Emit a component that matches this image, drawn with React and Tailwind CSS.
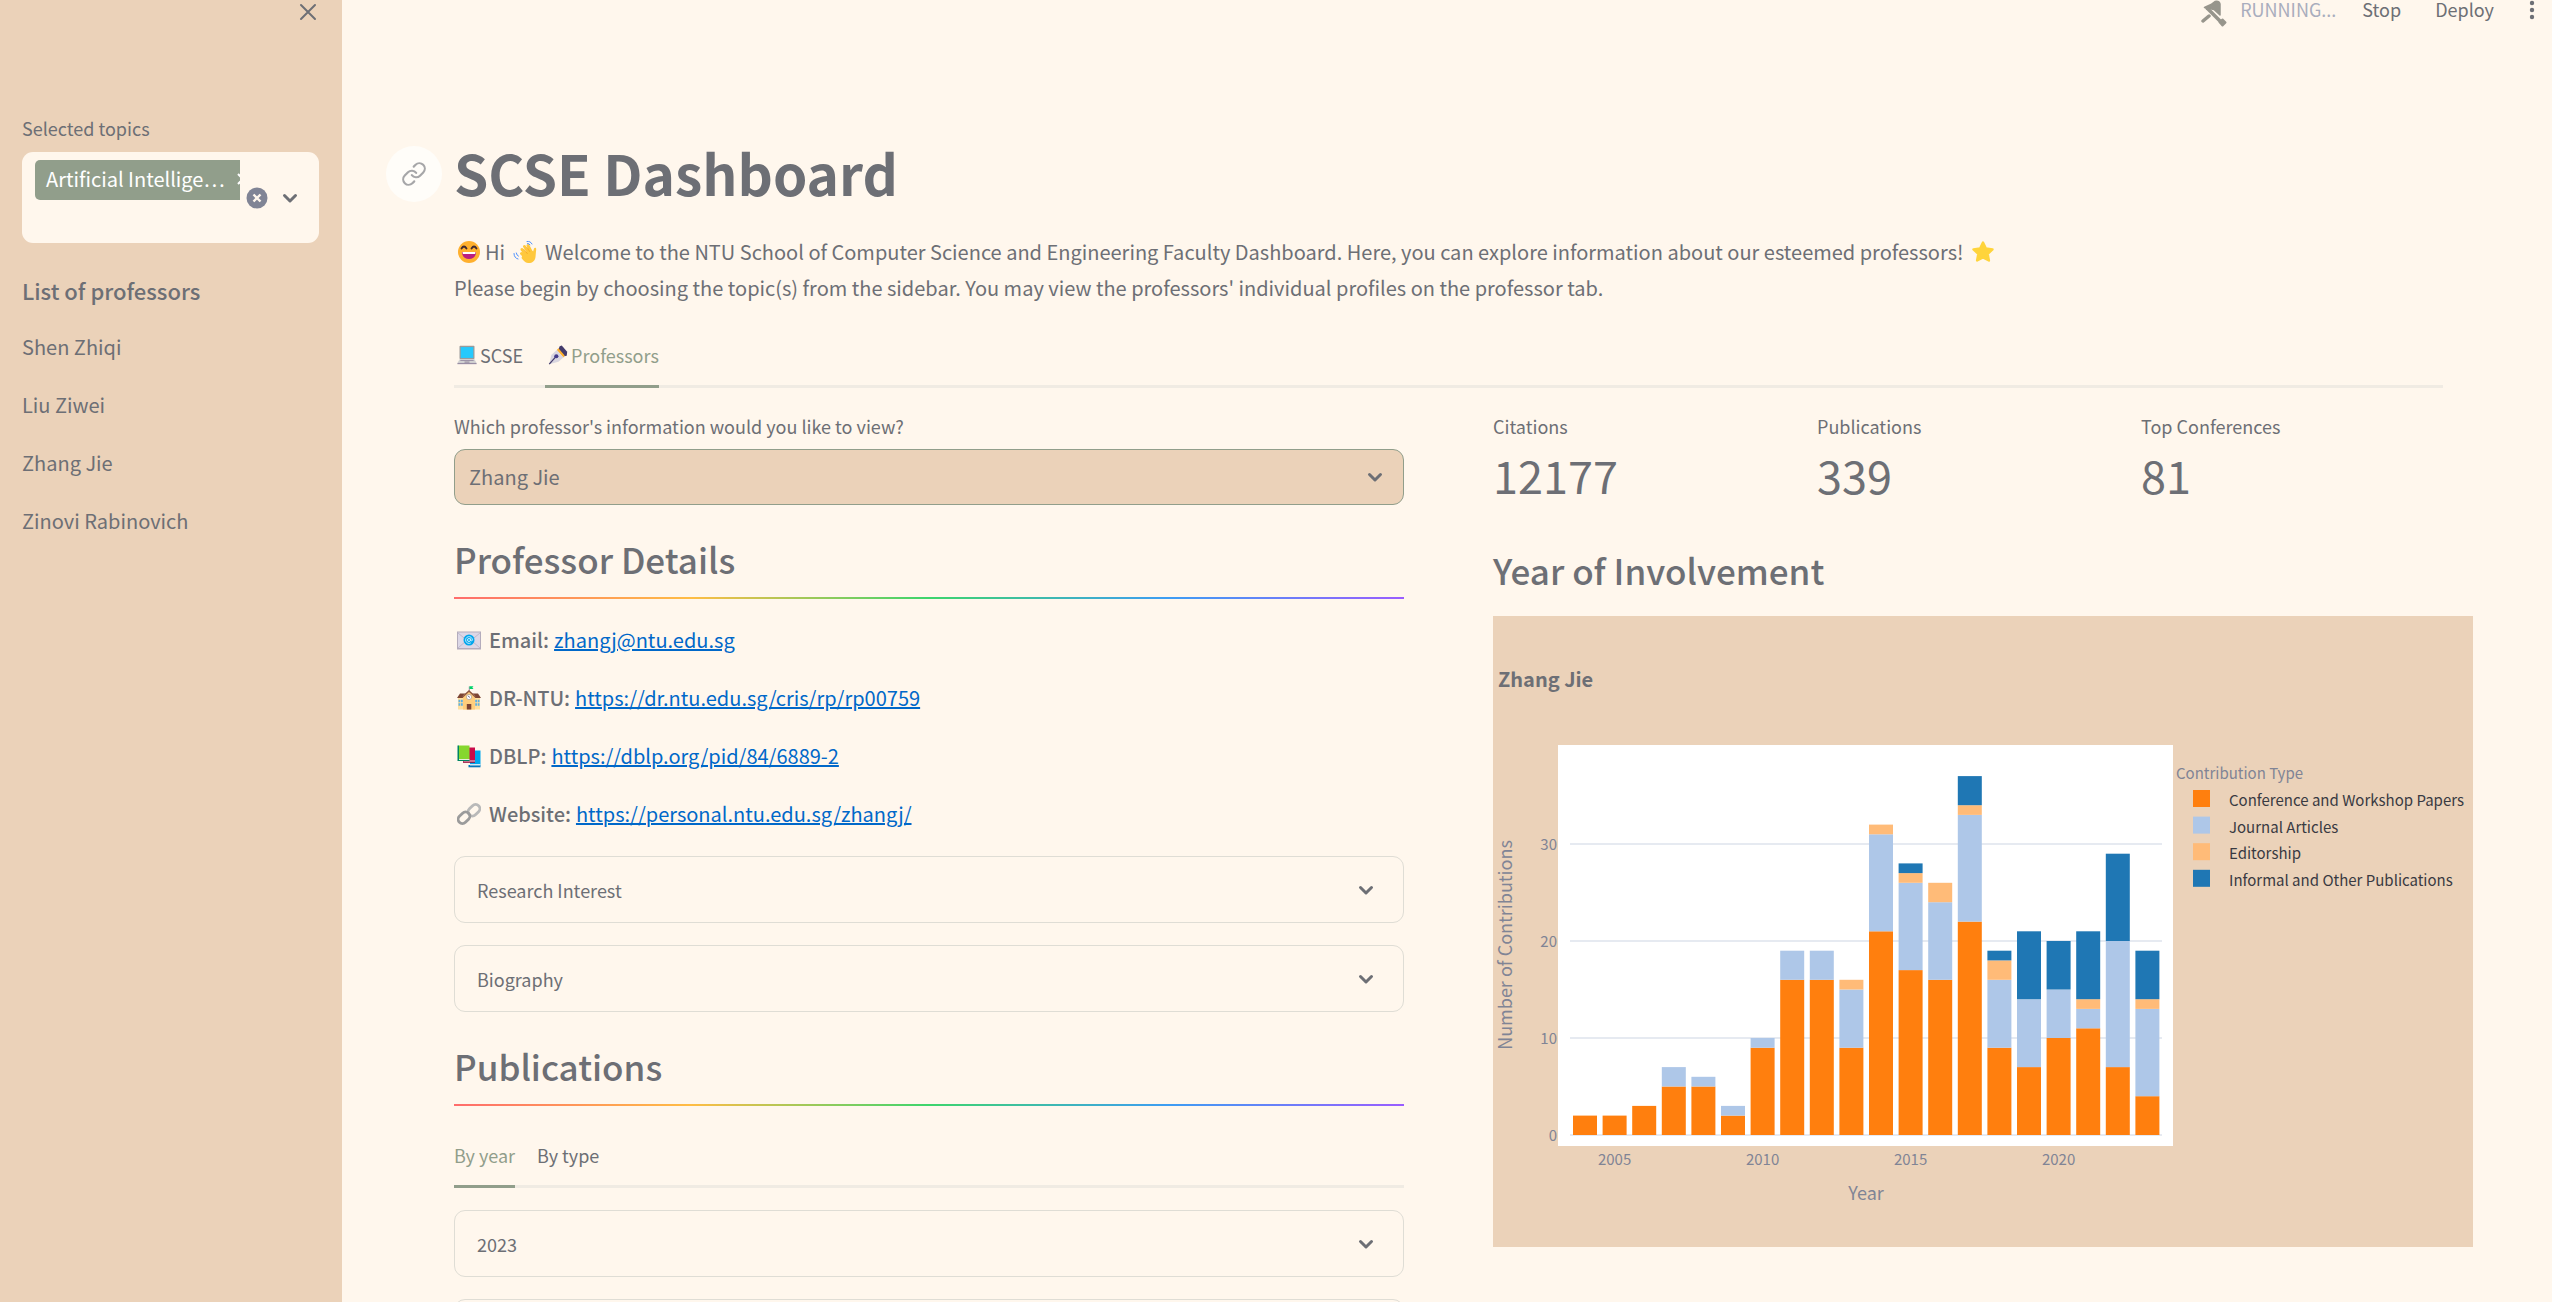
import React from "react";

const YEARS = [
  [2004, 2, 0, 0, 0],
  [2005, 2, 0, 0, 0],
  [2006, 3, 0, 0, 0],
  [2007, 5, 2, 0, 0],
  [2008, 5, 1, 0, 0],
  [2009, 2, 1, 0, 0],
  [2010, 9, 1, 0, 0],
  [2011, 16, 3, 0, 0],
  [2012, 16, 3, 0, 0],
  [2013, 9, 6, 1, 0],
  [2014, 21, 10, 1, 0],
  [2015, 17, 9, 1, 1],
  [2016, 16, 8, 2, 0],
  [2017, 22, 11, 1, 3],
  [2018, 9, 7, 2, 1],
  [2019, 7, 7, 0, 7],
  [2020, 10, 5, 0, 5],
  [2021, 11, 2, 1, 7],
  [2022, 7, 13, 0, 9],
  [2023, 4, 9, 1, 5],
];
const SERIES = [
  ["Conference and Workshop Papers", "#ff7f0e"],
  ["Journal Articles", "#aec7e8"],
  ["Editorship", "#ffbb78"],
  ["Informal and Other Publications", "#1f77b4"],
];

function Chevron({ className = "" }) {
  return (
    <svg viewBox="0 0 24 24" className={`h-6 w-6 shrink-0 ${className}`} fill="none" stroke="#6d6f75" strokeWidth="3" strokeLinecap="round" strokeLinejoin="round" aria-hidden="true">
      <path d="M6.500 9.500l5.500 5.500 5.500-5.500" />
    </svg>
  );
}

function Emoji({ label, size = "h-6 w-6", children }) {
  return (
    <svg viewBox="0 0 24 24" role="img" aria-label={label} className={`inline-block shrink-0 ${size}`}>
      {children}
    </svg>
  );
}

const Smile = () => (
  <Emoji label="smile">
    <circle cx="12" cy="12" r="11" fill="#ffb02e" />
    <path d="M4.500 8.500q2.500-4 5 0M14.500 8.500q2.500-4 5 0" stroke="#402a32" strokeWidth="1.800" fill="none" strokeLinecap="round" />
    <path d="M5 12h14c0 4.500-3 7-7 7s-7-2.500-7-7z" fill="#bb1d80" />
    <path d="M5.500 12h13l-.4 2H5.900z" fill="#fff" />
  </Emoji>
);
const Wave = () => (
  <Emoji label="wave">
    <g stroke="#ffc83d" strokeWidth="2.900" strokeLinecap="round" fill="none">
      <path d="M9 9.500l4 5M11.500 6.500l4 6M15 5.500l3 6M8.500 13.500l3 3" />
    </g>
    <path d="M10 13.500l8.500-3.500 1.600 1.500L21 8.500c.8-1.200 2.300-.6 2.200.8L22.500 17c-.6 4.500-4 6.500-7.500 6-3-.5-4.700-2.300-6.500-5z" fill="#ffc83d" />
    <path d="M10.800 9.200l3.700 4.600M13.800 7.200l3.200 4.700" stroke="#f59f1b" strokeWidth=".7" />
    <path d="M14 1.500q3.500-.6 5 2.500M14.500 3.500q1.700-.2 2.500 1.300M1 13.500q0 4.500 4 5.500M3.300 13q.2 2.300 2.200 3.200" stroke="#5092ff" strokeWidth="1" fill="none" strokeLinecap="round" />
  </Emoji>
);
const Star = () => (
  <Emoji label="star">
    <path d="M12 2.500l2.900 6 6.600.9-4.800 4.600 1.200 6.500-5.900-3.100-5.900 3.100L7.300 14 2.500 9.400l6.600-.9z" fill="#ffd43b" stroke="#ffd43b" strokeWidth="2.400" strokeLinejoin="round" />
  </Emoji>
);
const Laptop = () => (
  <Emoji label="laptop" size="h-5 w-5">
    <rect x="3" y="1" width="18" height="16" rx="1" fill="#9b9b9b" />
    <rect x="4.500" y="2.500" width="15" height="13" fill="#26c9fc" />
    <path d="M3 17h18l2.500 5H.5z" fill="#d3d3d3" />
    <path d="M4 18.500h16" stroke="#998ea4" strokeWidth="1.200" />
    <path d="M9 20.500h6" stroke="#8a7f96" strokeWidth="1.200" />
    <path d="M.5 21.500h23v1.500H.5z" fill="#998ea4" />
  </Emoji>
);
const Pen = () => (
  <Emoji label="pen" size="h-5 w-5">
    <path d="M14 1.500l2.500-1L23 8l-.5 5-3 .5-7-8z" fill="#433b6b" />
    <path d="M12.500 4l7.500 8.500-1.500 2.500-8-9z" fill="#ffb02e" />
    <path d="M10.500 6l8 9-6 5L1.500 23 4 12z" fill="#d9d6e0" />
    <path d="M1.500 23l8-9" stroke="#433b6b" strokeWidth="1.500" />
    <circle cx="10" cy="13.500" r="2.500" fill="#433b8b" />
  </Emoji>
);
const Mail = () => (
  <Emoji label="e-mail">
    <rect x="0" y="3.500" width="24" height="18" fill="#b4acbc" />
    <rect x="1" y="4.500" width="22" height="15.500" fill="#dcd7e6" />
    <path d="M1 5l11 9L23 5M1 20l8-7M23 20l-8-7" stroke="#c0b9cc" strokeWidth="1" fill="none" />
    <circle cx="12" cy="12" r="5.500" fill="#00a6ed" />
    <circle cx="12" cy="12" r="1.500" fill="none" stroke="#c8efff" strokeWidth="1" />
    <path d="M13.700 10.300v2.200q1.300 1.200 1.700-.5a3.400 3.400 0 1 0-1.600 2.900" fill="none" stroke="#c8efff" strokeWidth=".9" />
  </Emoji>
);
const School = () => (
  <Emoji label="school">
    <path d="M12.300 6V.5" stroke="#998ea4" strokeWidth="1" />
    <path d="M12.500.3h4L15.300 1.600l1.200 1.400h-4z" fill="#00d26a" />
    <path d="M1 11h22v12.500H1z" fill="#ffdf9e" />
    <path d="M3 7.500h18l3 4.500H0z" fill="#7d4533" />
    <path d="M6 9.500L12 4.500l6 5v14H6z" fill="#ffce7c" />
    <path d="M5 11.500L12 5l7 6.500" stroke="#8c5543" strokeWidth="1.500" fill="none" />
    <circle cx="12" cy="11" r="2.600" fill="#fff" stroke="#9b8e85" strokeWidth=".6" />
    <path d="M11.300 9.800l1.200 1.700" stroke="#433b6b" strokeWidth=".9" fill="none" />
    <path d="M1.500 15h1.800M4 15h1.800M1.500 18.500h1.800M4 18.500h1.800M18.200 15H20M20.700 15h1.800M18.200 18.500H20M20.700 18.500h1.800" stroke="#5fb0e0" strokeWidth="2.500" />
    <path d="M9.800 18h4.500v5.500H9.800z" fill="#7d4533" />
  </Emoji>
);
const Books = () => (
  <Emoji label="books">
    <path d="M13 6.500h10.500v15H13z" fill="#00a6ed" />
    <path d="M11.500 21h12v2.300h-12z" fill="#0074ba" />
    <path d="M13 20h10.500v1.500H13z" fill="#d3e8f5" />
    <path d="M8 3.500h10V17H8z" fill="#ca0b4a" />
    <path d="M6 16.500h12v2.300H6z" fill="#990838" />
    <path d="M6.500 16.500H18v1H6.500z" fill="#f0e0ea" />
    <path d="M1.500 1.500h11V15h-11z" fill="#86d72f" />
    <path d="M.5 1.500h1.500v14H.5zM.5 15.500h12v1.500H.5z" fill="#008463" />
    <path d="M2 15h10.500v1H2z" fill="#e6f0dc" />
  </Emoji>
);
const LinkEmoji = () => (
  <Emoji label="link">
    <g fill="none" strokeWidth="2.800">
      <rect x="10.500" y="4" width="13" height="8.500" rx="4.250" transform="rotate(-45 17 8.250)" stroke="#b9b9b9" />
      <rect x=".5" y="11.500" width="13" height="8.500" rx="4.250" transform="rotate(-45 7 15.750)" stroke="#9b9b9b" />
    </g>
  </Emoji>
);

function Expander({ title }) {
  return (
    <button className="flex h-[67px] w-full items-center justify-between rounded-[11px] border border-[#dfddd5] pr-[25px] pl-[22px] text-lg leading-7">
      <span>{title}</span>
      <Chevron />
    </button>
  );
}

function SectionTitle({ children }) {
  return (
    <h2 className="border-b-2 pb-4 text-[35px] leading-[44px] font-medium" style={{ borderImage: "linear-gradient(to right,#ff6c6c,#ffbd45,#3dd56d,#3d9df3,#9a5dff) 1" }}>
      {children}
    </h2>
  );
}

function Chart() {
  const x = (year) => 92 + (year - 2004) * 29.6;
  const y = (v) => 519 - v * 9.7;
  return (
    <svg viewBox="0 0 980 631" className="mt-6 block w-[calc(100%+30px)] max-w-none bg-[#ebd2b9]" role="img" aria-label="Contributions per year for Zhang Jie">
      <text x="5" y="71" fontSize="20" fontWeight="700" fill="#6d6f75">Zhang Jie</text>
      <rect x="65" y="129" width="615" height="401" fill="#fff" />
      {[0, 10, 20, 30].map((v) => (
        <g key={v}>
          <path d={`M77 ${y(v)}H669`} stroke="#e6eaf1" strokeWidth="2" />
          <text x="64" y={y(v) + 6} textAnchor="end" fontSize="15" fill="#808495">{v}</text>
        </g>
      ))}
      {YEARS.map(([year, ...values]) => {
        let base = 0;
        return values.map((value, i) => {
          base += value;
          return value ? <rect key={`${year}-${i}`} x={x(year) - 12} y={y(base)} width="24" height={value * 9.7} fill={SERIES[i][1]} /> : null;
        });
      })}
      {[2005, 2010, 2015, 2020].map((year) => (
        <text key={year} x={x(year)} y="549" textAnchor="middle" fontSize="15" fill="#808495">{year}</text>
      ))}
      <text x="373" y="584" textAnchor="middle" fontSize="18" fill="#808495">Year</text>
      <text transform="translate(19 329) rotate(-90)" textAnchor="middle" fontSize="18" fill="#808495">Number of Contributions</text>
      <text x="683" y="163" fontSize="15" fill="#808495">Contribution Type</text>
      {SERIES.map(([name, color], i) => (
        <g key={name}>
          <rect x="700" y={174 + i * 26.6} width="17" height="17" fill={color} />
          <text x="736" y={190 + i * 26.6} fontSize="15" fill="#393a42">{name}</text>
        </g>
      ))}
    </svg>
  );
}

const LINKS = [
  [Mail, "Email:", "zhangj@ntu.edu.sg", "mailto:zhangj@ntu.edu.sg"],
  [School, "DR-NTU:", "https://dr.ntu.edu.sg/cris/rp/rp00759"],
  [Books, "DBLP:", "https://dblp.org/pid/84/6889-2"],
  [LinkEmoji, "Website:", "https://personal.ntu.edu.sg/zhangj/"],
];

export default function App() {
  return (
    <div className="flex h-screen overflow-hidden bg-[#fff7ed] font-['Noto_Sans_CJK_SC',sans-serif] text-[#6d6f75]">
      <aside className="w-[342px] shrink-0 bg-[#ebd2b9] px-[22px]">
        <div className="flex h-6 items-center justify-end pr-px">
          <button aria-label="Close sidebar">
            <svg viewBox="0 0 22 22" className="h-[22px] w-[22px]" stroke="#6d6f75" strokeWidth="2" strokeLinecap="round" aria-hidden="true">
              <path d="M4 4l14 14M18 4L4 18" />
            </svg>
          </button>
        </div>
        <div id="topics-label" className="mt-[90px] text-lg leading-7">Selected topics</div>
        <div role="group" aria-labelledby="topics-label" className="mt-[10px] mr-px flex h-[91px] items-center rounded-[11px] bg-[#fff7ed] pr-[17px] pl-[13px]">
          <div className="w-[205px] self-start overflow-hidden pt-2">
            <div className="flex h-10 w-[228px] items-center rounded-[5px] bg-[#919e8b] pb-0.5 pl-[11px] text-xl text-white">
              <span className="whitespace-nowrap">Artificial Intellige…</span>
              <button aria-label="Remove Artificial Intelligence" className="ml-auto">
                <svg viewBox="0 0 12 12" className="mr-[14px] h-3 w-3" stroke="#fff" strokeWidth="2" aria-hidden="true"><path d="M1 1l10 10M11 1L1 11" /></svg>
              </button>
            </div>
          </div>
          <button aria-label="Clear all" className="ml-[6px]">
            <svg viewBox="0 0 22 22" className="h-[22px] w-[22px]" aria-hidden="true">
              <circle cx="11" cy="11" r="10.500" fill="#808495" />
              <path d="M7.500 7.500l7 7M14.500 7.500l-7 7" stroke="#fff7ed" strokeWidth="2.400" />
            </svg>
          </button>
          <button aria-label="Open topics" className="ml-auto"><Chevron /></button>
        </div>
        <h2 className="mt-[31px] text-[22px] leading-8 font-medium">List of professors</h2>
        <ul className="mt-[23px] flex flex-col gap-[22px] text-xl leading-9">
          {["Shen Zhiqi", "Liu Ziwei", "Zhang Jie", "Zinovi Rabinovich"].map((name) => (
            <li key={name}>{name}</li>
          ))}
        </ul>
      </aside>

      <main className="min-w-0 flex-1">
        <header className="flex h-7 items-start justify-end text-lg leading-[18px]">
          <svg viewBox="0 0 26 28" className="h-7 w-[26px]" fill="none" stroke="#97958c" strokeLinecap="round" strokeLinejoin="round" aria-hidden="true">
            <path d="M3.500 7.500L10 4.500l4-3q4-1 5 2.500v11l-6-5.500z" fill="#97958c" strokeWidth="1.500" />
            <path d="M6 8l14 14" strokeWidth="3.500" />
            <path d="M2 21l6-5" strokeWidth="3.500" />
            <path d="M18.500 22l3-2.500 3 3-3 3z" fill="#97958c" strokeWidth="2" />
          </svg>
          <span className="ml-[13px] text-[#a9adbd]">RUNNING...</span>
          <button className="ml-[26px]">Stop</button>
          <button className="ml-[34px]">Deploy</button>
          <button aria-label="Menu" className="mr-[14px] ml-8">
            <svg viewBox="0 0 12 20" className="h-5 w-3" fill="#6d6f75" aria-hidden="true">
              <circle cx="6" cy="3" r="2.200" /><circle cx="6" cy="10" r="2.200" /><circle cx="6" cy="17" r="2.200" />
            </svg>
          </button>
        </header>

        <div className="pt-[106px] pr-[109px] pl-[112px]">
          <div className="relative">
            <a href="#scse-dashboard" aria-label="Link to SCSE Dashboard" className="absolute top-3 -left-[68px] flex h-14 w-14 items-center justify-center rounded-full bg-[#fffdf9]">
              <svg viewBox="0 0 24 24" className="h-[26px] w-[26px]" fill="none" stroke="#a6a6a8" strokeWidth="2" strokeLinecap="round" strokeLinejoin="round" aria-hidden="true">
                <path d="M10 13a5 5 0 0 0 7.540.540l3-3a5 5 0 0 0-7.070-7.070l-1.720 1.710" />
                <path d="M14 11a5 5 0 0 0-7.540-.540l-3 3a5 5 0 0 0 7.070 7.070l1.710-1.710" />
              </svg>
            </a>
            <h1 id="scse-dashboard" className="text-[55px] leading-[76px] font-bold">SCSE Dashboard</h1>
          </div>
          <p className="mt-6 text-xl leading-9">
            <span className="flex items-center pl-[3px]">
              <Smile /><span className="mr-2 ml-1">Hi</span><Wave />
              <span className="mx-2">Welcome to the NTU School of Computer Science and Engineering Faculty Dashboard. Here, you can explore information about our esteemed professors!</span>
              <Star />
            </span>
            Please begin by choosing the topic(s) from the sidebar. You may view the professors' individual profiles on the professor tab.
          </p>

          <nav className="mt-[23px] flex h-[59px] gap-[22px] border-b-[3px] border-[#f0ebe3] text-lg" role="tablist">
            <button role="tab" aria-selected="false" className="-mb-[3px] flex items-center gap-[3px] border-b-[3px] border-transparent pb-1 pl-[3px]"><Laptop />SCSE</button>
            <button role="tab" aria-selected="true" className="-mb-[3px] flex items-center gap-[3px] border-b-[3px] border-[#919e8b] pb-1 pl-[3px] text-[#919e8b]"><Pen />Professors</button>
          </nav>

          <div className="grid grid-cols-2 gap-[89px] pt-[24px]">
            <section>
              <label htmlFor="professor" className="block text-lg leading-7">Which professor's information would you like to view?</label>
              <div className="mt-[9px] grid items-center">
                <select id="professor" className="col-start-1 row-start-1 h-14 w-full appearance-none rounded-[11px] border border-[#919e8b] bg-[#ebd2b9] px-[14px] text-xl">
                  <option>Zhang Jie</option>
                </select>
                <Chevron className="pointer-events-none col-start-1 row-start-1 mr-[17px] justify-self-end" />
              </div>
              <div className="mt-8"><SectionTitle>Professor Details</SectionTitle></div>
              <ul className="mt-[23px] flex flex-col gap-[22px] text-xl leading-9">
                {LINKS.map(([Icon, label, text, href]) => (
                  <li key={label} className="flex items-center pl-[3px]">
                    <Icon />
                    <span className="mr-[5px] ml-2 font-medium">{label}</span>
                    <a href={href || text} className="text-[#0068c9] underline">{text}</a>
                  </li>
                ))}
              </ul>
              <div className="mt-6 flex flex-col gap-[22px]">
                <Expander title="Research Interest" />
                <Expander title="Biography" />
              </div>
              <div className="mt-8"><SectionTitle>Publications</SectionTitle></div>
              <nav className="mt-[23px] flex h-[59px] gap-[22px] border-b-[3px] border-[#f0ebe3] text-lg" role="tablist">
                <button role="tab" aria-selected="true" className="-mb-[3px] border-b-[3px] border-[#919e8b] pb-1 text-[#919e8b]">By year</button>
                <button role="tab" aria-selected="false" className="-mb-[3px] border-b-[3px] border-transparent pb-1">By type</button>
              </nav>
              <div className="mt-[22px] flex flex-col gap-[22px]">
                <Expander title="2023" />
                <Expander title="2022" />
              </div>
            </section>

            <section>
              <dl className="grid grid-cols-3 gap-[22px]">
                {[["Citations", "12177"], ["Publications", "339"], ["Top Conferences", "81"]].map(([name, value]) => (
                  <div key={name}>
                    <dt className="text-lg leading-7">{name}</dt>
                    <dd className="mt-1 text-[45px] leading-[62px]">{value}</dd>
                  </div>
                ))}
              </dl>
              <h2 className="mt-[42px] text-[35px] leading-[44px] font-medium">Year of Involvement</h2>
              <Chart />
            </section>
          </div>
        </div>
      </main>
    </div>
  );
}
